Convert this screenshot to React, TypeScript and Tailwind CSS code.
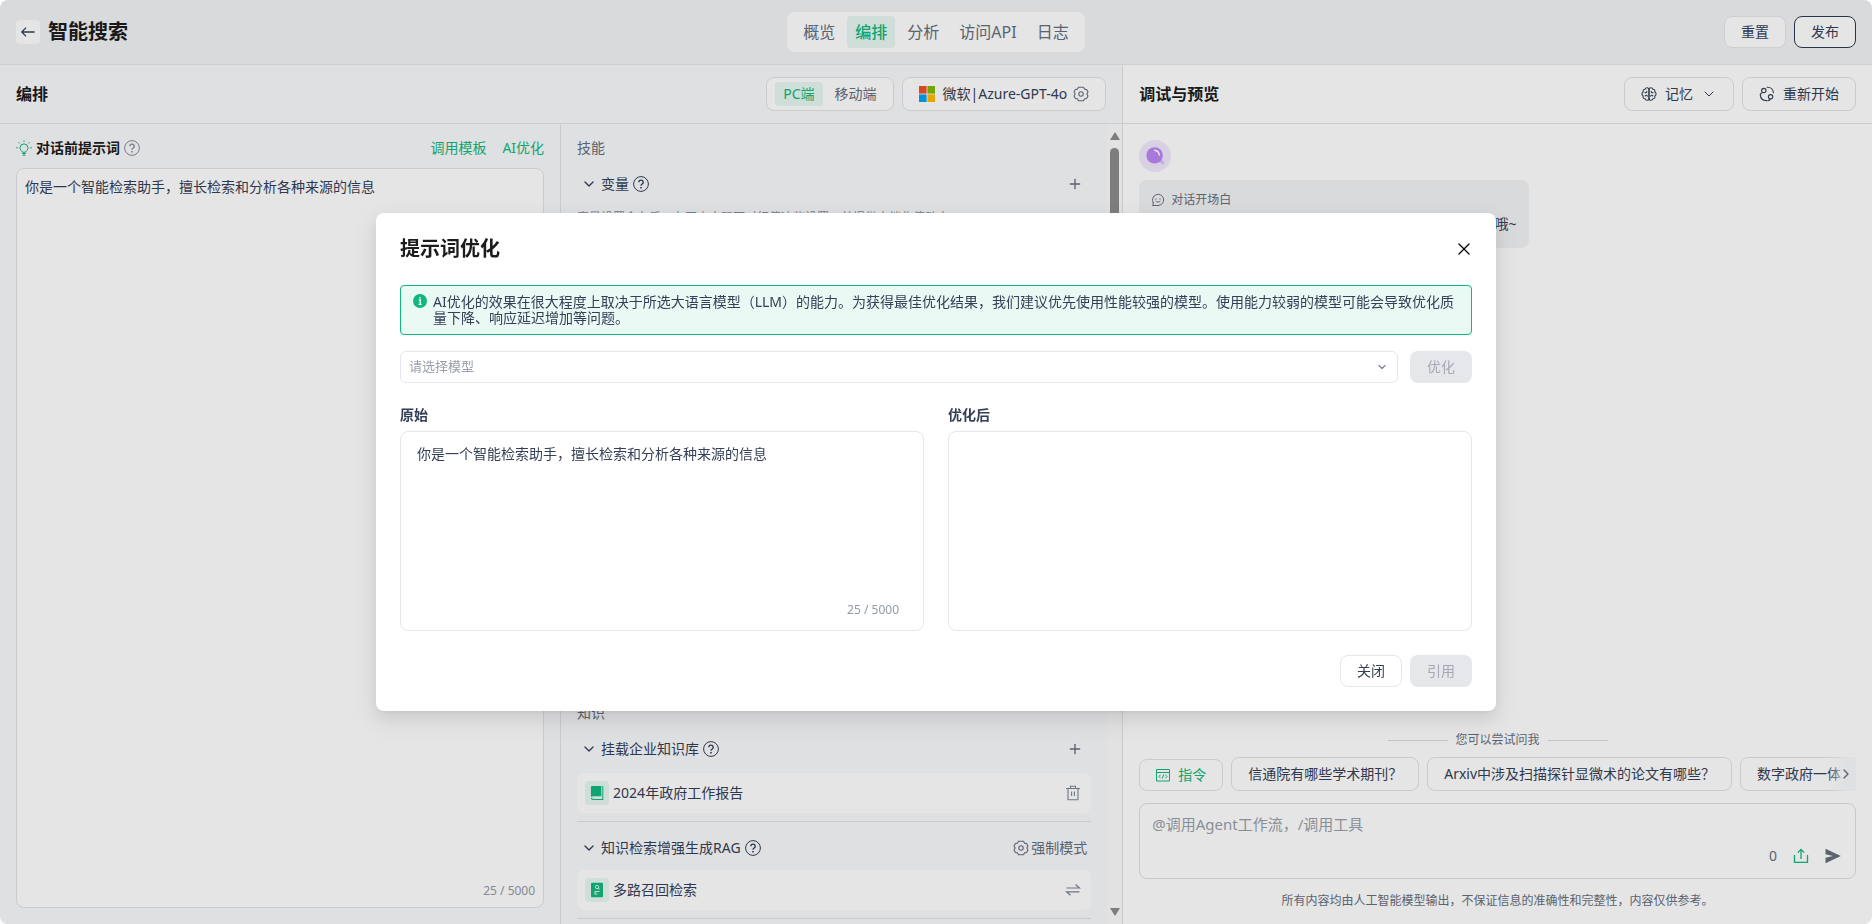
import React from "react";
import { ChevronDown, ChevronRight, Plus, X } from "lucide-react";

type IconProps = { className?: string };

const HelpIcon = ({ className = "" }: IconProps) => (
  <svg viewBox="0 0 16 16" className={"size-4 shrink-0 " + className} fill="none" stroke="currentColor">
    <circle cx="8" cy="8" r="7.4" strokeWidth="1" />
    <path d="M5.8 6.2a2.2 2.1 0 1 1 3.4 1.8c-.8.5-1.2.9-1.2 1.8" strokeWidth="1.4" />
    <path d="M8 11v1.5" strokeWidth="1.6" />
  </svg>
);

const ArrowLeftIcon = () => (
  <svg viewBox="0 0 16 16" className="size-4" fill="none" stroke="currentColor" strokeWidth="1.3">
    <path d="M14.5 8H2M6 3.6 1.8 8 6 12.4" />
  </svg>
);

const BulbIcon = () => (
  <svg viewBox="0 0 16 16" className="size-4 shrink-0 text-[#12b77d]" fill="none" stroke="currentColor">
    <path d="M6.3 12.2c0-1.2-2.3-2-2.3-4.3a4 4 0 0 1 8 0c0 2.3-2.3 3.1-2.3 4.3z" strokeWidth="1" />
    <path d="M6.2 13.5h3.6M6.8 15.2h2.4" strokeWidth="1.2" />
    <path d="M8 .4v1.5M2.3 2.2l1.2 1.2M13.7 2.2l-1.2 1.2M.2 7.8h1.7M14.1 7.8h1.7" strokeWidth="1" />
  </svg>
);

const GearIcon = ({ className = "" }: IconProps) => (
  <svg viewBox="0 0 16 16" className={"size-4 shrink-0 " + className} fill="none" stroke="currentColor" strokeWidth="1.1" strokeLinejoin="round">
    <path d="M5.500 1.300h5l1 1.800 2.100.4L15 6l-1.200 2 1.200 2-1.400 2.500-2.100.4-1 1.800h-5l-1-1.800-2.100-.4L1 10l1.200-2L1 6l1.400-2.500 2.100-.4z" />
    <circle cx="8" cy="8" r="2.200" />
  </svg>
);

const BrainIcon = () => (
  <svg viewBox="0 0 16 16" className="size-4 shrink-0" fill="none" stroke="currentColor" strokeWidth="1.1" strokeLinecap="round" strokeLinejoin="round">
    <path d="M8 3A2 2 0 0 0 4.200 3.200 2 2 0 0 0 2.200 6a2.200 2.200 0 0 0 0 4 2 2 0 0 0 2 2.800A2 2 0 0 0 8 13z" />
    <path d="M8 3a2 2 0 0 1 3.800.2 2 2 0 0 1 2 2.800 2.200 2.200 0 0 1 0 4 2 2 0 0 1-2 2.800A2 2 0 0 1 8 13z" />
    <path d="M4 6.600c1.100.3 1.800-.2 1.800-1.200M12 6.600c-1.100.3-1.800-.2-1.800-1.200M4.200 9.900c.6-1 1.800-.9 2.100.2M11.800 9.900c-.6-1-1.800-.9-2.100.2" />
  </svg>
);

const RestartIcon = () => (
  <svg viewBox="0 0 16 16" className="size-4 shrink-0" fill="none" stroke="currentColor" strokeWidth="1.1" strokeLinecap="round">
    <circle cx="4.8" cy="4.6" r="2.2" />
    <circle cx="11.6" cy="10.8" r="2.2" />
    <path d="M8.2 1.3c3.5-.2 6 2 6.2 5.5M1.3 8.6c.2 3.7 2.7 6.1 6.5 6" />
    <path d="M1.3 8.6c.1-1.1.9-1.8 2-1.9M9 14.6c1.2-.1 2-.6 2.300-1.600" />
  </svg>
);

const SmileIcon = () => (
  <svg viewBox="0 0 14 14" className="size-3.5 shrink-0" fill="none" stroke="currentColor" strokeWidth="1" strokeLinecap="round">
    <path d="M2.2 9.7A5.6 5.6 0 1 1 7 12.5H1.600c.6-.7.8-1.700.6-2.800" />
    <path d="M5 5.8v.5M9 5.8v.5M4.9 8.3c1 1.2 3.2 1.2 4.2 0" />
  </svg>
);

const BookIcon = () => (
  <svg viewBox="0 0 16 16" className="size-4" fill="#12b77d">
    <path d="M3.2 1h9.1v10.3H4.2c-1 0-1.8.4-2.3 1V2.3C1.900 1.600 2.500 1 3.200 1z" />
    <path d="M13.3 1h1v14H4.2c-1.3 0-2.3-.9-2.3-2h1.200c.1.600.5.900 1.100.900h9.100z" />
  </svg>
);

const DocIcon = () => (
  <svg viewBox="0 0 16 16" className="size-4" fill="none">
    <rect x="2" y=".8" width="12" height="14.4" rx="1" fill="#12b77d" />
    <circle cx="8" cy="5" r="1.7" stroke="#d5f3e8" />
    <path d="m9.2 6.2 1.3 1.2M5.5 9.5h5M6 9.5v3M6 12h2.6" stroke="#d5f3e8" strokeWidth="1.1" />
  </svg>
);

const TrashIcon = () => (
  <svg viewBox="0 0 16 16" className="size-4" fill="none" stroke="currentColor" strokeWidth="1.1">
    <path d="M1 3.5h14M3 3.5v11.2h10V3.5M5.5 3.3V1.2h5v2.1M6.6 6.5v4.5M9.4 6.5v4.5" />
  </svg>
);

const SwapIcon = () => (
  <svg viewBox="0 0 16 16" className="size-4" fill="none" stroke="currentColor" strokeWidth="1.2">
    <path d="M1.5 6h13L10.5 2.500M14.500 9.800h-13l4 3.500" />
  </svg>
);

const CommandIcon = () => (
  <svg viewBox="0 0 14 14" className="size-3.5 shrink-0" fill="none" stroke="currentColor" strokeWidth="1">
    <path d="M.5 1.5h13v11.5H.5zM.5 4.500h13" />
    <path d="M4.5 6.8 3 8.5l1.5 1.7M9.5 6.8 11 8.5l-1.5 1.7M7.6 6.5l-1.200 4" />
  </svg>
);

const UploadIcon = () => (
  <svg viewBox="0 0 16 16" className="size-4" fill="none" stroke="currentColor" strokeWidth="1.3">
    <path d="M1.5 7v7.3h13V7M8 11V1.5M4.8 4.6 8 1.4l3.200 3.200" />
  </svg>
);

const SendIcon = () => (
  <svg viewBox="0 0 16 16" className="size-4" fill="currentColor">
    <path d="M.5.8 15.8 8 .5 15.2V9.8L8 8 .5 6.2z" />
  </svg>
);

const MicrosoftLogo = () => (
  <svg viewBox="0 0 16 16" className="size-4 shrink-0">
    <path fill="#f25022" d="M0 0h7.6v7.6H0z" />
    <path fill="#7fba00" d="M8.4 0H16v7.6H8.4z" />
    <path fill="#00a4ef" d="M0 8.4h7.6V16H0z" />
    <path fill="#ffb900" d="M8.4 8.4H16V16H8.4z" />
  </svg>
);

const SearchAvatar = () => (
  <svg viewBox="0 0 32 32" className="size-8">
    <circle cx="16" cy="16" r="16" fill="#f1e8fd" />
    <path d="m20 19.5 3.800 3.300" stroke="#dcc3f8" strokeWidth="3.2" strokeLinecap="round" />
    <circle cx="15.6" cy="15.4" r="8.2" fill="#bb86f5" />
    <path d="M15.6 10.3c2.7.3 4.4 2 4.7 4.7" stroke="#fff" strokeWidth="1.5" strokeLinecap="round" fill="none" />
  </svg>
);

const tabs = ["概览", "编排", "分析", "访问API", "日志"];

function TopBar() {
  return (
    <header className="grid h-[65px] shrink-0 grid-cols-[1fr_auto_1fr] items-center rounded-t-lg border-b border-[#e5e7eb] bg-[#f2f3f5] px-4">
      <div className="flex items-center gap-2">
        <button aria-label="返回" className="flex size-6 items-center justify-center rounded bg-white">
          <ArrowLeftIcon />
        </button>
        <h1 className="text-xl font-bold text-[#1c1c1c]">智能搜索</h1>
      </div>
      <nav className="flex h-10 items-center gap-1 rounded-lg bg-white px-2 text-base text-[#666e7d]">
        {tabs.map((t) => (
          <a
            key={t}
            href="#"
            className={t === "编排" ? "flex h-8 items-center rounded bg-[#e7f8f2] px-2 font-medium text-[#12b77d]" : "flex h-8 items-center px-2"}
          >
            {t}
          </a>
        ))}
      </nav>
      <div className="flex justify-end gap-2 text-sm">
        <button className="h-8 rounded-lg border border-[#e5e7eb] bg-white px-4">重置</button>
        <button className="h-8 rounded-lg border border-[#2f3b52] bg-white px-4">发布</button>
      </div>
    </header>
  );
}

function PromptPanel() {
  return (
    <section className="flex min-w-0 flex-col border-r border-[#e1e3e7] px-4 pt-3 pb-4">
      <div className="flex h-6 items-center gap-1 text-sm">
        <BulbIcon />
        <h3 className="font-bold text-[#1c1c1c]">对话前提示词</h3>
        <HelpIcon className="text-[#868d9b]" />
        <button className="ml-auto text-[#12b77d]">调用模板</button>
        <button className="ml-3 text-[#12b77d]">AI优化</button>
      </div>
      <div className="mt-2 flex flex-1 flex-col rounded-lg border border-[#e1e3e7] bg-white px-2 pt-2 pb-1">
        <textarea aria-label="对话前提示词" className="w-full flex-1 resize-none text-sm leading-5 outline-none" defaultValue="你是一个智能检索助手，擅长检索和分析各种来源的信息" />
        <span className="self-end text-xs leading-6 text-[#9299a6]">25 / 5000</span>
      </div>
    </section>
  );
}

function SkillHeader({ title, children }: { title: string; children: React.ReactNode }) {
  return (
    <div className="flex h-11 items-center gap-1 px-1 text-sm">
      <ChevronDown className="size-4" strokeWidth={2} />
      <span>{title}</span>
      <HelpIcon />
      <div className="ml-auto flex items-center text-[#666e7d]">{children}</div>
    </div>
  );
}

function SkillItem({ icon, title, action }: { icon: React.ReactNode; title: string; action: React.ReactNode }) {
  return (
    <div className="flex h-10 items-center rounded-lg bg-white pr-2.5 pl-2 text-sm">
      <span className="flex size-6 items-center justify-center rounded bg-[#e7f8f2]">{icon}</span>
      <span className="ml-1">{title}</span>
      <button aria-label="操作" className="ml-auto text-[#7c8494]">{action}</button>
    </div>
  );
}

function SkillsPanel() {
  return (
    <section className="flex min-w-0">
      <div className="flex min-w-0 flex-1 flex-col overflow-hidden px-4 text-sm">
        <h3 className="mt-3 h-6 leading-6 text-[#666e7d]">技能</h3>
        <div className="py-0.5">
          <SkillHeader title="变量">
            <button aria-label="添加变量" className="mr-1"><Plus className="size-4" /></button>
          </SkillHeader>
        </div>
        <p className="text-xs leading-5 text-[#868d9b]">变量设置会在后，在开启之际可对行使这些设置，并提供文档化值动态</p>
        <div className="min-h-0 flex-1" />
        <h3 className="h-6 leading-6 text-[#666e7d]">知识</h3>
        <div className="py-0.5">
          <SkillHeader title="挂载企业知识库">
            <button aria-label="添加知识库" className="mr-1"><Plus className="size-4" /></button>
          </SkillHeader>
        </div>
        <SkillItem icon={<BookIcon />} title="2024年政府工作报告" action={<TrashIcon />} />
        <hr className="mt-2 border-[#dfe1e5]" />
        <div className="pt-1">
          <SkillHeader title="知识检索增强生成RAG">
            <button className="flex items-center gap-0.5">
              <GearIcon />
              强制模式
            </button>
          </SkillHeader>
        </div>
        <SkillItem icon={<DocIcon />} title="多路召回检索" action={<SwapIcon />} />
        <hr className="mt-2 mb-[5px] border-[#dfe1e5]" />
      </div>
      <div className="flex w-[15px] flex-col items-center bg-[#fcfcfd] py-2">
        <svg viewBox="0 0 10 8" className="h-2 w-2.5" fill="#8c8c8c"><path d="M5 0 10 8H0z" /></svg>
        <div className="mt-2 h-[420px] w-[9px] rounded-full bg-[#8c8c8c]" />
        <svg viewBox="0 0 10 8" className="mt-auto h-2 w-2.5" fill="#8c8c8c"><path d="M5 8 10 0H0z" /></svg>
      </div>
    </section>
  );
}

function Workspace() {
  return (
    <div className="flex min-w-0 flex-col border-r border-[#e1e3e7] bg-[#f9fafc]">
      <div className="flex h-[59px] shrink-0 items-center border-b border-[#e1e3e7] px-4 text-sm">
        <h2 className="mr-auto text-base font-bold text-[#1c1c1c]">编排</h2>
        <div className="flex h-[34px] items-center rounded-lg border border-[#e1e3e7] bg-white px-2 text-[#666e7d]">
          <button className="h-6 rounded bg-[#e7f8f2] px-2 text-[#12b77d]">PC端</button>
          <button className="ml-1 h-6 px-2">移动端</button>
        </div>
        <button className="ml-2 flex h-[34px] items-center rounded-lg border border-[#e1e3e7] bg-white px-4">
          <MicrosoftLogo />
          <span className="ml-2">微软|Azure-GPT-4o</span>
          <GearIcon className="ml-1.5 text-[#666e7d]" />
        </button>
      </div>
      <div className="grid min-h-0 flex-1 grid-cols-2">
        <PromptPanel />
        <SkillsPanel />
      </div>
    </div>
  );
}

function Preview() {
  return (
    <div className="flex min-w-0 flex-col bg-white">
      <div className="flex h-[59px] shrink-0 items-center gap-2 border-b border-[#e1e3e7] px-4 text-sm">
        <h2 className="mr-auto text-base font-bold text-[#1c1c1c]">调试与预览</h2>
        <button className="flex h-[34px] items-center gap-2 rounded-lg border border-[#e1e3e7] px-4">
          <BrainIcon />
          记忆
          <ChevronDown className="size-4" strokeWidth={1.5} />
        </button>
        <button className="flex h-[34px] items-center gap-2 rounded-lg border border-[#e1e3e7] px-4">
          <RestartIcon />
          重新开始
        </button>
      </div>
      <div className="flex min-h-0 flex-1 flex-col items-start px-4 pt-4">
        <SearchAvatar />
        <div className="mt-2 rounded-lg bg-[#f2f3f5] px-3 py-2">
          <div className="flex h-6 items-center gap-1.5 text-xs text-[#666e7d]">
            <SmileIcon />
            对话开场白
          </div>
          <p className="pb-1 text-sm leading-6">Hi! 我是智能搜索助手，请输入要检索的内容，我来查找哦~</p>
        </div>
      </div>
      <footer className="flex flex-col px-4">
        <div className="flex items-center justify-center gap-2 text-xs leading-[18px] text-[#666e7d]">
          <span className="h-px w-15 bg-[#d9dce1]" />
          您可以尝试问我
          <span className="h-px w-15 bg-[#d9dce1]" />
        </div>
        <div className="mt-2 flex items-end gap-2 text-sm">
          <button className="flex h-8 shrink-0 items-center gap-2 rounded-lg border border-[#e1e3e7] px-4 text-[#12b77d]">
            <CommandIcon />
            指令
          </button>
          <div className="relative flex min-w-0 flex-1 gap-2 overflow-hidden">
            <button className="h-[34px] shrink-0 rounded-lg border border-[#e1e3e7] px-4">信通院有哪些学术期刊？</button>
            <button className="h-[34px] shrink-0 rounded-lg border border-[#e1e3e7] px-4">Arxiv中涉及扫描探针显微术的论文有哪些？</button>
            <button className="h-[34px] shrink-0 rounded-lg border border-[#e1e3e7] px-4">数字政府一体</button>
            <button aria-label="更多" className="absolute inset-y-0 right-0 flex w-7 items-center justify-end bg-linear-to-r from-[#f9fafc]/0 to-[#f9fafc] to-70% pr-0.5">
              <ChevronRight className="size-4 text-[#666e7d]" />
            </button>
          </div>
        </div>
        <div className="mt-3 flex h-[76px] flex-col rounded-lg border border-[#dcdfe4] px-3 pt-2 pb-3">
          <input aria-label="消息" className="text-[15px] leading-6 outline-none placeholder:text-[#9a9fab]" placeholder="@调用Agent工作流，/调用工具" />
          <div className="mt-auto flex items-center justify-end gap-4 pr-0.5 text-sm leading-5 text-[#666e7d]">
            <span>0</span>
            <button aria-label="上传" className="text-[#12b77d]"><UploadIcon /></button>
            <button aria-label="发送"><SendIcon /></button>
          </div>
        </div>
        <p className="pt-3 pb-[13px] text-center text-xs leading-5 text-[#666e7d]">所有内容均由人工智能模型输出，不保证信息的准确性和完整性，内容仅供参考。</p>
      </footer>
    </div>
  );
}

function OptimizeDialog() {
  return (
    <div className="fixed inset-0 flex items-center justify-center rounded-lg bg-black/10">
      <div role="dialog" aria-labelledby="dialog-title" className="w-[1120px] max-w-full rounded-lg bg-white p-6 shadow-[0_6px_16px_rgba(0,0,0,0.08),0_3px_6px_-4px_rgba(0,0,0,0.12),0_9px_28px_8px_rgba(0,0,0,0.05)]">
        <div className="flex h-6 items-center justify-between">
          <h2 id="dialog-title" className="text-xl font-bold text-[#1c1c1c]">提示词优化</h2>
          <button aria-label="关闭对话框" className="-mr-0.5 text-black"><X className="size-5" strokeWidth={1.5} /></button>
        </div>
        <div className="mt-6 flex gap-1.5 rounded border border-[#12b77d] bg-[#e9f9f4] px-3 py-2 text-sm leading-4">
          <svg viewBox="0 0 14 14" className="size-3.5 shrink-0">
            <circle cx="7" cy="7" r="7" fill="#12b77d" />
            <path d="M7 3v1.6M5.8 6h1.4v4M5.6 10.3h3" stroke="#fff" strokeWidth="1.3" fill="none" />
          </svg>
          <p>AI优化的效果在很大程度上取决于所选大语言模型（LLM）的能力。为获得最佳优化结果，我们建议优先使用性能较强的模型。使用能力较弱的模型可能会导致优化质量下降、响应延迟增加等问题。</p>
        </div>
        <div className="mt-4 flex gap-3">
          <div className="relative flex-1">
            <select aria-label="请选择模型" className="h-8 w-full appearance-none rounded-md border border-[#e5e7eb] bg-white px-2 text-[13px] text-[#9a9fab] outline-none">
              <option>请选择模型</option>
            </select>
            <ChevronDown className="pointer-events-none absolute top-2.5 right-2.5 size-3 text-[#7c8494]" strokeWidth={2.5} />
          </div>
          <button disabled className="h-8 rounded-lg bg-[#e5e7eb] px-[17px] text-sm text-[#a4a9b4]">优化</button>
        </div>
        <div className="mt-6 grid grid-cols-2 gap-6 text-sm">
          <div>
            <label htmlFor="original" className="block leading-4 font-bold">原始</label>
            <div className="mt-2 flex h-50 flex-col rounded-lg border border-[#e5e7eb] px-4 pt-3 pb-2">
              <textarea id="original" className="flex-1 resize-none leading-5 outline-none" defaultValue="你是一个智能检索助手，擅长检索和分析各种来源的信息" />
              <span className="mr-2 self-end text-xs leading-6 text-[#9299a6]">25 / 5000</span>
            </div>
          </div>
          <div>
            <label htmlFor="optimized" className="block leading-4 font-bold">优化后</label>
            <textarea id="optimized" readOnly className="mt-2 block h-50 w-full resize-none rounded-lg border border-[#e5e7eb] px-4 py-3 outline-none" />
          </div>
        </div>
        <div className="mt-6 flex justify-end gap-2 text-sm">
          <button className="h-8 rounded-lg border border-[#e5e7eb] px-4">关闭</button>
          <button disabled className="h-8 rounded-lg bg-[#e5e7eb] px-[17px] text-[#a4a9b4]">引用</button>
        </div>
      </div>
    </div>
  );
}

export default function App() {
  return (
    <div className="flex h-screen flex-col overflow-hidden bg-white font-['Noto_Sans','Noto_Sans_CJK_SC',sans-serif] text-[#354056]">
      <TopBar />
      <main className="grid min-h-0 flex-1 grid-cols-[3fr_2fr]">
        <Workspace />
        <Preview />
      </main>
      <OptimizeDialog />
    </div>
  );
}
